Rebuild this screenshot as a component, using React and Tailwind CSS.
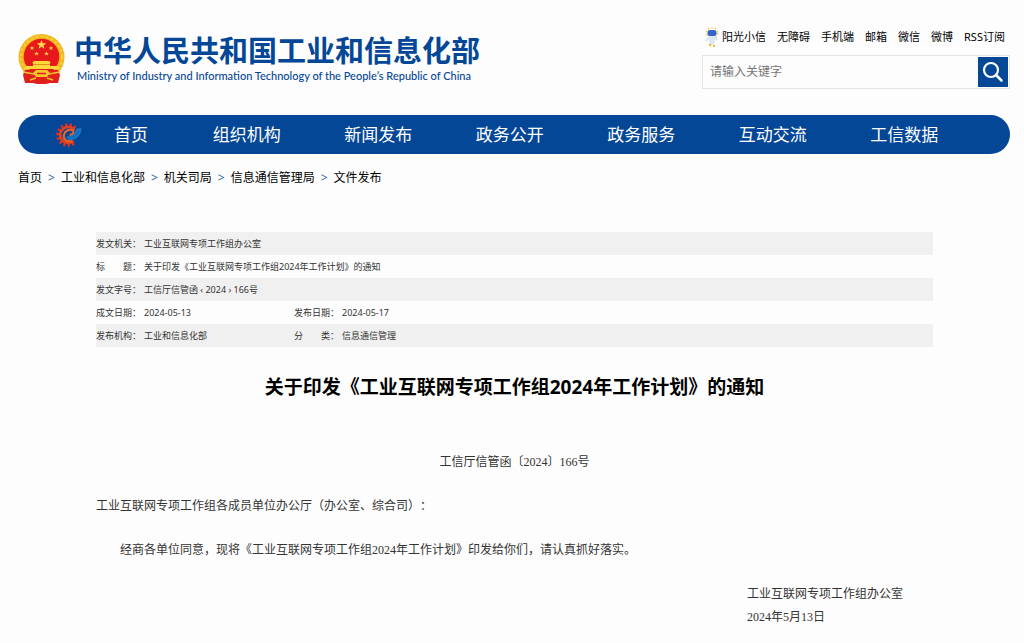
import React from 'react';

const topLinks = ['无障碍', '手机端', '邮箱', '微信', '微博', 'RSS订阅'];
const navItems = ['组织机构', '新闻发布', '政务公开', '政务服务', '互动交流', '工信数据'];
const crumbs = ['首页', '工业和信息化部', '机关司局', '信息通信管理局', '文件发布'];

const metaRows = [
  [['发文机关：', '工业互联网专项工作组办公室']],
  [['标　　题：', '关于印发《工业互联网专项工作组2024年工作计划》的通知']],
  [['发文字号：', '工信厅信管函 ‹ 2024 › 166号']],
  [['成文日期：', '2024-05-13'], ['发布日期：', '2024-05-17']],
  [['发布机构：', '工业和信息化部'], ['分　　类：', '信息通信管理']],
];

const teeth = [60, 85, 110, 135, 160, 185, 210, 235, 260, 285, 310];

const Emblem = () => (
  <svg viewBox="0 0 48 52" className="h-[52px] w-12 shrink-0" aria-hidden="true">
    <circle cx="23.5" cy="24" r="23" fill="#f0b81e" />
    <circle cx="23.5" cy="24" r="20.5" fill="none" stroke="#f7cf3c" strokeWidth="2" strokeDasharray="3 2" />
    <circle cx="23.5" cy="23.5" r="17.8" fill="#e8191d" />
    <path d="M7 37h33l2 5-2 8-8 0-4 1h-9l-4-1-8 0-2-8z" fill="#e0201b" />
    <path d="M23.5 7l1.2 3.3h3.5l-2.8 2.1 1 3.4-2.9-2-2.9 2 1-3.4-2.8-2.1h3.5z" fill="#ffe14a" />
    <g fill="#ffd83c">
      <path d="M14 13l.7 1.500h1.600l-1.300 1 .5 1.600-1.500-1-1.500 1 .5-1.600-1.300-1h1.600z" />
      <path d="M33 13l.7 1.500h1.600l-1.300 1 .5 1.600-1.500-1-1.500 1 .5-1.600-1.300-1h1.600z" />
      <path d="M18.500 18.500l.7 1.500h1.600l-1.300 1 .5 1.600-1.500-1-1.500 1 .5-1.600-1.300-1h1.600z" />
      <path d="M28.500 18.500l.7 1.500h1.600l-1.300 1 .5 1.600-1.500-1-1.500 1 .5-1.600-1.300-1h1.600z" />
      <path d="M16 28h15l2 2h-1v3h7l2 3H6l2-3h7v-3h-1z" />
    </g>
    <path d="M15 31.500h17" stroke="#e88a1c" strokeWidth="1" />
    <path d="M18 37h11l3 3-3 4H18l-3-4z" fill="#f6c42c" />
    <path d="M19 40.500h9" stroke="#e0201b" strokeWidth="1.500" />
    <path d="M5 39l11 2M42 39l-11 2M12 47l6-2M35 47l-6-2" fill="none" stroke="#f6c42c" strokeWidth="1.500" />
  </svg>
);

const Mascot = () => (
  <svg viewBox="0 0 14 20" className="h-5 w-3.5 shrink-0" aria-hidden="true">
    <circle cx="7" cy="6" r="5.500" fill="none" stroke="#f6c93a" strokeWidth="1.500" strokeDasharray="1.500 2" />
    <path d="M3 8h8l-1 6-1 4H5l-1-4z" fill="#dce8f8" />
    <path d="M3 11l-2 3M10 10l2 3" stroke="#cfe0f5" strokeWidth="1.500" />
    <rect x="2.500" y="3" width="9" height="6" rx="2.500" fill="#3565c8" />
    <path d="M4 17.500l2 1M8 19h2" stroke="#f3b62f" strokeWidth="2" />
  </svg>
);

const GearLogo = () => (
  <svg viewBox="0 0 24 24" className="h-6 w-6 shrink-0 overflow-visible" aria-hidden="true">
    {teeth.map((a) => (
      <rect key={a} x="19" y="10.800" width="4" height="2.400" rx="1" fill="#dc3022" transform={`rotate(${a} 11 12)`} />
    ))}
    <path d="M16.500 18A8 8 0 1 1 17.500 7" fill="none" stroke="#e2401f" strokeWidth="2.600" />
    <path d="M15 18C9 19.500 6 16 7 11.500 8 7.500 13 5.500 16 7.500c1.500 1.500 0 3.800-3.500 4.800" fill="none" stroke="#f26322" strokeWidth="2" />
    <path d="M9.500 13.200C14 14 18 11.500 19.500 5.800l5-.8C24.500 12 19 17.500 13 17c-2-.2-3.300-1.800-3.500-3.800z" fill="#1977c6" />
    <path d="M12 15c4 0 8-2.500 10-7" fill="none" stroke="#0d5aa8" strokeWidth=".8" />
  </svg>
);

const SearchIcon = () => (
  <svg viewBox="0 0 24 24" className="h-6 w-6" fill="none" stroke="currentColor" strokeWidth="2.2" aria-hidden="true">
    <circle cx="10" cy="10" r="7" />
    <path d="M15 15l5.500 5.500" strokeWidth="2.600" strokeLinecap="round" />
  </svg>
);

const Header = () => (
  <header className="flex items-start justify-between">
    <a href="#" className="flex items-start pt-2">
      <Emblem />
      <div className="ml-2 whitespace-nowrap text-[#054797]">
        <h1 className="text-[29px] font-bold leading-9">中华人民共和国工业和信息化部</h1>
        <p className="pl-[3px] font-['Lato',sans-serif] text-[11px] font-medium leading-[14px]">
          Ministry of Industry and Information Technology of the People’s Republic of China
        </p>
      </div>
    </a>
    <div className="w-[308px] shrink-0">
      <div className="flex items-center gap-[11px] whitespace-nowrap pl-[3px] text-[11px] leading-6 text-black">
        <a href="#" className="flex items-center gap-[3px]">
          <Mascot />
          阳光小信
        </a>
        {topLinks.map((link) => (
          <a key={link} href="#">{link}</a>
        ))}
      </div>
      <form className="mt-1.5 flex h-[34px] items-center border border-[#e4e4e4] pr-px">
        <input
          type="text"
          aria-label="请输入关键字"
          placeholder="请输入关键字"
          className="min-w-0 flex-1 bg-transparent px-[7px] text-[12px] outline-none placeholder:text-[#757575]"
        />
        <button type="button" aria-label="搜索" className="flex h-[30px] w-[30px] items-center justify-center bg-[#054797] text-white">
          <SearchIcon />
        </button>
      </form>
    </div>
  </header>
);

const Nav = () => (
  <nav className="mt-[26px] flex h-[39px] items-center rounded-full bg-[#054797] pl-[39px] pr-10 text-[17px] text-white">
    <GearLogo />
    <a href="#" className="w-[100px] text-center">首页</a>
    {navItems.map((item) => (
      <a key={item} href="#" className="flex-1 text-center">{item}</a>
    ))}
  </nav>
);

const MetaTable = () => (
  <table className="w-full table-fixed text-left text-[9px] leading-4 text-[#333]">
    <colgroup>
      <col className="w-12" />
      <col className="w-[150px]" />
      <col className="w-12" />
      <col />
    </colgroup>
    <tbody>
      {metaRows.map((row) => (
        <tr key={row[0][0]} className="h-[23px] odd:bg-[#f0f0f0]">
          {row.map(([label, value]) => (
            <React.Fragment key={label}>
              <th scope="row" className="whitespace-nowrap p-0 font-normal">{label}</th>
              <td colSpan={row.length === 1 ? 3 : 1} className="p-0">{value}</td>
            </React.Fragment>
          ))}
        </tr>
      ))}
    </tbody>
  </table>
);

const App = () => {
  return (
    <div className="min-h-screen bg-[#fdfdfd] pb-3 pl-[18px] pr-3.5 pt-[25px] font-['Noto_Sans','Noto_Sans_CJK_SC',sans-serif]">
      <Header />
      <Nav />

      <div className="mt-3 flex gap-1.5 text-[12px] leading-6 text-black">
        {crumbs.map((crumb, i) => (
          <React.Fragment key={crumb}>
            {i > 0 && <span className="text-[#2a68ad]">&gt;</span>}
            <a href="#">{crumb}</a>
          </React.Fragment>
        ))}
      </div>

      <main className="mt-[42px] pl-[78px] pr-[77px]">
        <MetaTable />
        <h2 className="mt-6 text-center text-[19px] font-bold leading-8 text-black">
          关于印发《工业互联网专项工作组2024年工作计划》的通知
        </h2>

        {/* document body */}
        <article className="mt-12 font-['Liberation_Serif','Noto_Sans_CJK_SC',serif] text-[12px] leading-[23px] text-[#333] [text-spacing-trim:space-all]">
          <p className="text-center">工信厅信管函〔2024〕166号</p>
          <p className="mt-[21px]">工业互联网专项工作组各成员单位办公厅（办公室、综合司）：</p>
          <p className="mt-[21px] indent-6">
            经商各单位同意，现将《工业互联网专项工作组2024年工作计划》印发给你们，请认真抓好落实。
          </p>
          <div className="ml-auto mt-[21px] w-[186px]">
            <p>工业互联网专项工作组办公室</p>
            <p>2024年5月13日</p>
          </div>
        </article>
      </main>
    </div>
  );
};

export default App;
